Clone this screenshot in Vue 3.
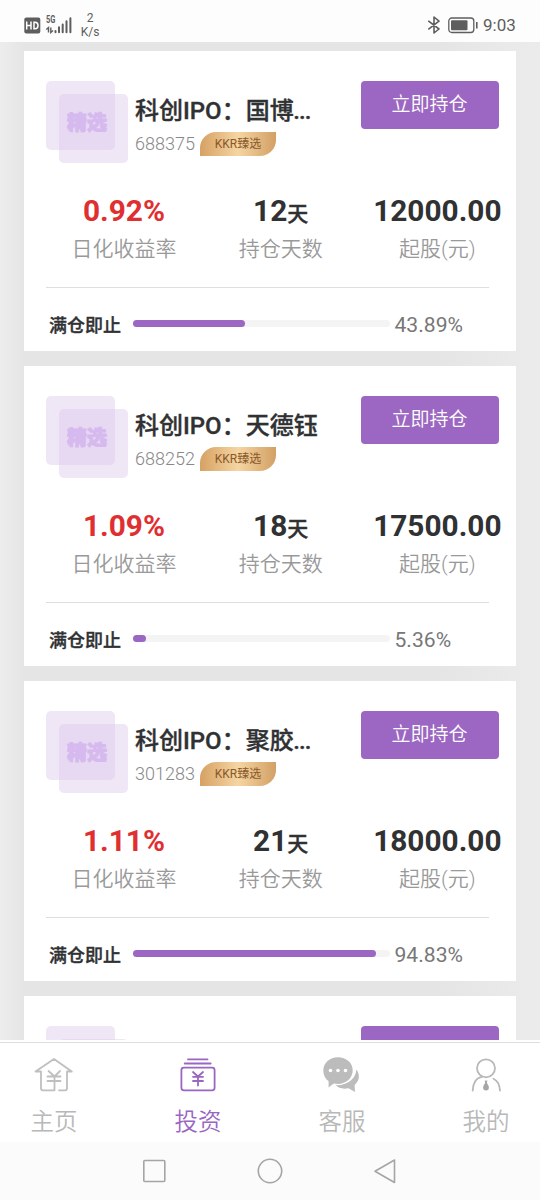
<script setup>
const products = [
  { name: '科创IPO：国博', more: true, code: '688375', rate: '0.92%', days: 12, min: '12000.00', progress: 43.89 },
  { name: '科创IPO：天德钰', more: false, code: '688252', rate: '1.09%', days: 18, min: '17500.00', progress: 5.36 },
  { name: '科创IPO：聚胶', more: true, code: '301283', rate: '1.11%', days: 21, min: '18000.00', progress: 94.83 }
]
</script>

<template>
  <div class="screen">
    <header class="status">
      <svg class="hd" width="17" height="17" viewBox="0 0 17 17">
        <rect x="0.3" y="0.5" width="16" height="16" rx="2" fill="#5e5e5e" />
        <path d="M2.700 4.500v8M7 4.500v8M2.700 8.500h4.300M10 5.200v6.600h1q3 0 3-3.300t-3-3.300z" fill="none" stroke="#fff" stroke-width="1.5" />
      </svg>
      <div class="signal">
        <span class="gen">5G</span>
        <svg width="28" height="18" viewBox="0 0 28 18">
          <path d="M3.500 16.500v-5l-2.200 2M5.800 11.500v5l2.200-2" fill="none" stroke="#5e5e5e" stroke-width="1.4" />
          <path d="M10.500 16.200v-1.200M14 16.200v-5M17.700 16.200v-7.700M21.500 16.200v-11M25.400 16.200v-14" fill="none" stroke="#5e5e5e" stroke-width="2" stroke-linecap="round" />
        </svg>
      </div>
      <div class="speed"><span>2</span><span>K/s</span></div>
      <div class="right">
        <svg width="14" height="18" viewBox="0 0 14 18">
          <path d="M1.300 4.800 12 13 7 17V1l5 4.200L1.300 13.300" fill="none" stroke="#5e5e5e" stroke-width="1.600" stroke-linejoin="round" />
        </svg>
        <svg class="battery" width="30" height="17" viewBox="0 0 30 17">
          <rect x="0.800" y="1" width="25" height="14.500" rx="3" fill="none" stroke="#5e5e5e" stroke-width="1.300" />
          <rect x="3" y="3.300" width="16.500" height="10" rx="1" fill="#5e5e5e" />
          <path d="M28.800 5v6.500" stroke="#5e5e5e" stroke-width="1.600" />
        </svg>
        <span class="time">9:03</span>
      </div>
    </header>

    <main class="list">
      <article v-for="p in products" :key="p.code" class="card">
        <div class="head">
          <div class="emblem"><i class="sq back"></i><i class="sq front"></i><span>精选</span></div>
          <div class="info">
            <h2>{{ p.name }}<span v-if="p.more" class="dots">...</span></h2>
            <div class="sub"><span class="code">{{ p.code }}</span><span class="badge">KKR臻选</span></div>
          </div>
          <button>立即持仓</button>
        </div>
        <div class="stats">
          <div><strong class="red">{{ p.rate }}</strong><span>日化收益率</span></div>
          <div><strong>{{ p.days }}<small>天</small></strong><span>持仓天数</span></div>
          <div><strong>{{ p.min }}</strong><span>起股(元)</span></div>
        </div>
        <div class="foot">
          <b>满仓即止</b>
          <div class="track"><div class="bar" :style="{ width: p.progress + '%' }"></div></div>
          <span>{{ p.progress }}%</span>
        </div>
      </article>
      <article class="card">
        <div class="head">
          <div class="emblem"><i class="sq back"></i><i class="sq front"></i></div>
          <div class="info"></div>
          <button aria-hidden="true"></button>
        </div>
      </article>
    </main>

    <nav class="tabs">
      <a>
        <svg width="40" height="36" viewBox="0 0 40 36">
          <g fill="none" stroke="#bfbfbf" stroke-width="1.800" stroke-linejoin="round" stroke-linecap="round">
            <path d="M25 33.300h6q2 0 2-2V14.500h4.800L20 2 1.500 14.500H7v16.800q0 2 2 2h11.500V19.500M14.500 14l6 5.500 5.500-5.500M13.500 19.500h13M13.500 24h13" />
          </g>
        </svg>
        <span>主页</span>
      </a>
      <a class="on">
        <svg width="40" height="36" viewBox="0 0 40 36">
          <g fill="none" stroke="#9966c2" stroke-width="1.800" stroke-linejoin="round" stroke-linecap="round">
            <path d="M10 2.400h19.500M6.700 6.500h26" />
            <rect x="3.400" y="10.700" width="33.200" height="22.600" rx="2.500" />
            <path d="m15 15 5 4.500 5-4.500M20 19.500v9M15 19.800h10M15 24h10" />
          </g>
        </svg>
        <span>投资</span>
      </a>
      <a>
        <svg class="chat" width="40" height="38" viewBox="0 0 40 38">
          <path d="M35.500 13.500c4 6 2.600 11.800-1.900 15.500l.4 7-6.500-3.800c-5.300 1.200-10 .1-13-3.100 10.500.7 20-5 21-15.600z" fill="#bcbcbc" />
          <path d="M17 1.300c8.300 0 14.700 5.500 14.700 13S25.300 28 17 28c-1.500 0-2.900-.2-4.200-.5L7.600 31.500v-6.200C4.300 22.800 2.300 19 2.300 14.500c0-7.500 6.400-13.200 14.700-13.200z" fill="#bcbcbc" />
          <g fill="#fff"><circle cx="9.500" cy="14.500" r="1.800" /><circle cx="17" cy="14.500" r="1.800" /><circle cx="24.500" cy="14.500" r="1.800" /></g>
        </svg>
        <span>客服</span>
      </a>
      <a>
        <svg width="40" height="36" viewBox="0 0 40 36">
          <g fill="none" stroke="#b8b8b8" stroke-width="1.800" stroke-linecap="round">
            <circle cx="20" cy="11.300" r="9" />
            <path d="M6.700 33.500c.3-7.500 3.700-13 9.300-13.700M34 33.500c-.4-5.800-2.600-9.900-6.500-11.800" />
          </g>
          <path d="m18.800 23 1.200 1 1.300-1-.4 3c1 1.500 2 3 2 4.500a2.900 2.900 0 0 1-5.800 0c0-1.500 1-3 2-4.500z" fill="#a6a6a6" />
        </svg>
        <span>我的</span>
      </a>
    </nav>

    <footer class="system">
      <svg width="26" height="26" viewBox="0 0 26 26"><rect x="2.800" y="2.500" width="21" height="21" rx="1" /></svg>
      <svg width="26" height="26" viewBox="0 0 26 26"><circle cx="13" cy="13" r="11.700" /></svg>
      <svg width="26" height="26" viewBox="0 0 26 26"><path d="M2 13.300 21.500 2v22.500z" /></svg>
    </footer>
  </div>
</template>

<style>
body { margin: 0; }
</style>

<style scoped>
* { box-sizing: border-box; }
.screen {
  width: 540px;
  height: 1200px;
  display: flex;
  flex-direction: column;
  overflow: hidden;
  background: #fff;
  color: #303133;
  font-family: Roboto, "Noto Sans CJK SC", sans-serif;
}
.status {
  height: 42px;
  flex: none;
  display: flex;
  padding: 0 24px;
  color: #5e5e5e;
  background: #fdfdfd;
}
.hd { margin-top: 17px; }
.signal { position: relative; width: 28px; margin: 16px 0 0 4px; }
.gen { position: absolute; left: 1px; top: -1px; font: bold 10px/10px Roboto; transform: scaleX(.75); transform-origin: left; }
.speed { width: 34px; display: flex; flex-direction: column; align-items: center; font-size: 12px; line-height: 13.500px; padding-top: 12px; }
.right { margin-left: auto; display: flex; align-items: center; padding-top: 8px; }
.battery { margin: 0 5px 0 7px; }
.time { font-size: 17px; width: 33px; white-space: nowrap; }

.list {
  flex: none;
  height: 998px;
  overflow: hidden;
  padding: 9px 24px 0;
  display: flex;
  flex-direction: column;
  gap: 15px;
  background: linear-gradient(90deg, #ededed, #e5e5e5 24px, #e5e5e5 440px, #eaeaea 516px, #ebebeb);
}
.card { height: 300px; flex: none; padding: 30px 0 0 22px; background: #fff; }
.head { display: flex; height: 83px; }
.emblem { position: relative; width: 82px; height: 82px; flex: none; }
.sq { position: absolute; width: 69px; height: 69px; border-radius: 5px; }
.back { left: 0; top: 0; background: #efe6f6; }
.front { left: 13px; top: 13px; background: rgba(220, 202, 236, .47); }
.emblem span { position: absolute; left: 21px; top: 29px; font-size: 20px; line-height: 26px; font-weight: 900; color: #d6b9ee; -webkit-text-stroke: .8px #d6b9ee; }
.info { width: 232.500px; flex: none; padding: 15px 0 0 7px; }
h2 { margin: 0; font-size: 24px; line-height: 30px; height: 36px; font-weight: 500; -webkit-text-stroke: .35px; white-space: nowrap; }
.dots { letter-spacing: -.9px; margin-left: -.5px; }
.sub { display: flex; align-items: center; height: 24px; }
.code { width: 65px; font-size: 18px; line-height: 22px; margin-top: -1px; font-weight: 300; color: #888; }
.badge {
  width: 76px;
  height: 24px;
  border-radius: 16px 0 16px 0;
  background: linear-gradient(90deg, #d6a164, #f5d5a2 50%, #d2a064);
  color: #8a5929;
  font-size: 12px;
  line-height: 24px;
  text-align: center;
}
button {
  width: 138px;
  height: 48px;
  flex: none;
  border: 0;
  border-radius: 4px;
  padding: 0;
  background: #9c67c2;
  color: #fff;
  font: 350 19px/46px Roboto, "Noto Sans CJK SC", sans-serif;
}
.stats { display: grid; grid-template-columns: repeat(3, 156.700px); height: 123px; margin-left: -.4px; padding-top: 28px; text-align: center; }
.stats div { display: flex; flex-direction: column; }
.stats strong { font-size: 29.800px; line-height: 38px; height: 38px; font-weight: 700; }
.stats small { font-size: 21px; font-weight: 500; -webkit-text-stroke: .35px; }
.stats .red { color: #df2f31; }
.stats span { font-size: 21px; line-height: 39px; font-weight: 350; color: #999; }
.foot { width: 443px; height: 64px; padding: 9px 0 0 3px; border-top: 1px solid #dedede; display: flex; align-items: center; }
.foot b { width: 83.500px; font-size: 18px; font-weight: 500; -webkit-text-stroke: .35px; }
.track { width: 257px; height: 7px; border-radius: 4px; background: #f4f4f4; margin-top: -1px; }
.bar { height: 100%; border-radius: 4px; background: #9c67c2; }
.foot span { margin-left: 5px; font-size: 21.100px; color: #777; }

.tabs { flex: none; height: 102px; padding-top: 14px; display: flex; justify-content: space-between; border-top: 2px solid #fff; box-shadow: inset 0 1px #dedede; background: #fff; }
.tabs a { width: 108px; display: flex; flex-direction: column; align-items: center; color: #b8b8b8; }
.tabs svg { height: 38px; flex: none; }
.tabs .chat { position: relative; left: -1.500px; }
.tabs span { font-size: 23.500px; line-height: 34px; margin-top: 11px; font-weight: 350; }
.tabs .on { color: #9966c2; }
.system { flex: none; height: 58px; background: #fbfbfb; display: flex; justify-content: center; align-items: center; gap: 90px; }
.system svg { fill: none; stroke: #a5a5a5; stroke-width: 1.600; stroke-linejoin: round; }
</style>
